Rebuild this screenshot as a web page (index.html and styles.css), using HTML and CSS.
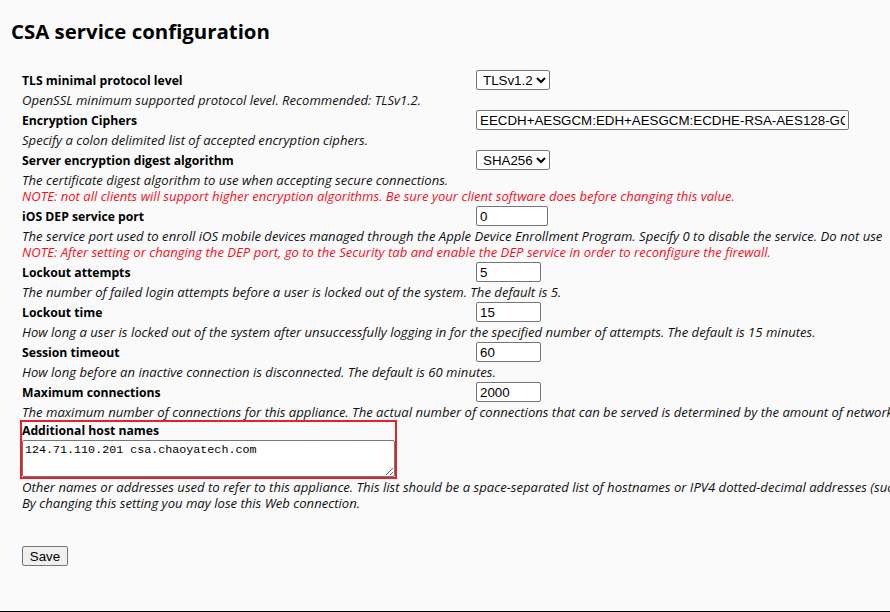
FILE: index.html
```html
<!DOCTYPE html>
<html lang="en">
<head>
    <meta charset="UTF-8">
    <title>CSA service configuration</title>
    <link rel="stylesheet" href="styles.css">
</head>
<body>
    <h2 class="page-title">CSA service configuration</h2>

    <form class="config-form">
        <div class="opt">
            <label class="opt-label">TLS minimal protocol level</label>
            <select class="opt-select">
                <option>TLSv1.2</option>
            </select>
        </div>
        <div class="desc">OpenSSL minimum supported protocol level. Recommended: TLSv1.2.</div>

        <div class="opt">
            <label class="opt-label">Encryption Ciphers</label>
            <input type="text" class="opt-input wide" value="EECDH+AESGCM:EDH+AESGCM:ECDHE-RSA-AES128-GCM-SHA256:ECDHE-RSA-AES256-GCM-SHA384">
        </div>
        <div class="desc">Specify a colon delimited list of accepted encryption ciphers.</div>

        <div class="opt">
            <label class="opt-label">Server encryption digest algorithm</label>
            <select class="opt-select">
                <option>SHA256</option>
            </select>
        </div>
        <div class="desc">
            The certificate digest algorithm to use when accepting secure connections.<br>
            <span class="note">NOTE: not all clients will support higher encryption algorithms. Be sure your client software does before changing this value.</span>
        </div>

        <div class="opt">
            <label class="opt-label">iOS DEP service port</label>
            <input type="text" class="opt-input port" value="0">
        </div>
        <div class="desc">
            The service port used to enroll iOS mobile devices managed through the Apple Device Enrollment Program. Specify 0 to disable the service. Do not use<br>
            <span class="note">NOTE: After setting or changing the DEP port, go to the Security tab and enable the DEP service in order to reconfigure the firewall.</span>
        </div>

        <div class="opt">
            <label class="opt-label">Lockout attempts</label>
            <input type="text" class="opt-input short" value="5">
        </div>
        <div class="desc">The number of failed login attempts before a user is locked out of the system. The default is 5.</div>

        <div class="opt">
            <label class="opt-label">Lockout time</label>
            <input type="text" class="opt-input short" value="15">
        </div>
        <div class="desc">How long a user is locked out of the system after unsuccessfully logging in for the specified number of attempts. The default is 15 minutes.</div>

        <div class="opt">
            <label class="opt-label">Session timeout</label>
            <input type="text" class="opt-input short" value="60">
        </div>
        <div class="desc">How long before an inactive connection is disconnected. The default is 60 minutes.</div>

        <div class="opt">
            <label class="opt-label">Maximum connections</label>
            <input type="text" class="opt-input short" value="2000">
        </div>
        <div class="desc">The maximum number of connections for this appliance. The actual number of connections that can be served is determined by the amount of network</div>

        <!-- highlighted block -->
        <div class="hosts">
            <label class="opt-label">Additional host names</label>
            <textarea class="hosts-text">124.71.110.201 csa.chaoyatech.com</textarea>
        </div>
        <div class="desc">
            Other names or addresses used to refer to this appliance. This list should be a space-separated list of hostnames or IPV4 dotted-decimal addresses (suc<br>
            By changing this setting you may lose this Web connection.
        </div>

        <button type="button" class="save-button">Save</button>
    </form>
</body>
</html>
```

FILE: styles.css
```css
html, body {
    margin: 0;
    padding: 0;
}

body {
    background-color: #fafafa;
    color: #000;
    font-family: "Open Sans", "Noto Sans", sans-serif;
    min-height: 100vh;
    box-sizing: border-box;
    border-bottom: 1px solid #000;
    overflow: hidden;
}

.page-title {
    font-size: 20.4px;
    font-weight: bold;
    margin: 0;
    padding: 17px 0 0 11px;
    line-height: 28px;
}

.config-form {
    padding: 25px 0 0 22px;
}

/* label on the left, control on the right */
.opt {
    display: grid;
    grid-template-columns: 454px auto;
    align-items: center;
    height: 20px;
}

.opt-label {
    font-size: 12.2px;
    font-weight: bold;
    white-space: nowrap;
}

.desc {
    font-size: 13.1px;
    font-style: italic;
    color: #111;
    line-height: 16px;
    padding: 2px 0;
    white-space: nowrap;
    overflow: hidden;
}

.note {
    color: #f5101c;
}

.opt-select,
.opt-input {
    font-family: "Liberation Sans", Arial, sans-serif;
    font-size: 13.33px;
    color: #000;
    background-color: #fff;
    border: 1px solid #767676;
    border-radius: 2px;
    height: 20px;
    box-sizing: border-box;
    margin: 0;
}

.opt-select {
    width: 74px;
    padding: 0 0 0 2px;
}

.opt-input {
    padding: 0 3px;
}

.opt-input.wide {
    width: 373px;
}

.opt-input.port {
    width: 72px;
}

.opt-input.short {
    width: 65px;
}

.hosts {
    display: flex;
    flex-direction: column;
    width: 373px;
    outline: 2px solid #e81f2c;
}

.hosts .opt-label {
    line-height: 18px;
}

.hosts-text {
    font-family: "Liberation Mono", monospace;
    font-size: 11.7px;
    height: 37px;
    width: 373px;
    box-sizing: border-box;
    border: 1px solid #767676;
    border-radius: 2px;
    padding: 2px 2px;
    margin: 0;
    resize: both;
    background-color: #fff;
}

.save-button {
    margin-top: 33px;
    font-family: "Liberation Sans", Arial, sans-serif;
    font-size: 13.33px;
    height: 20px;
    width: 46px;
    padding: 0;
    background-color: #efefef;
    border: 1px solid #767676;
    border-radius: 2px;
    color: #000;
}
```
